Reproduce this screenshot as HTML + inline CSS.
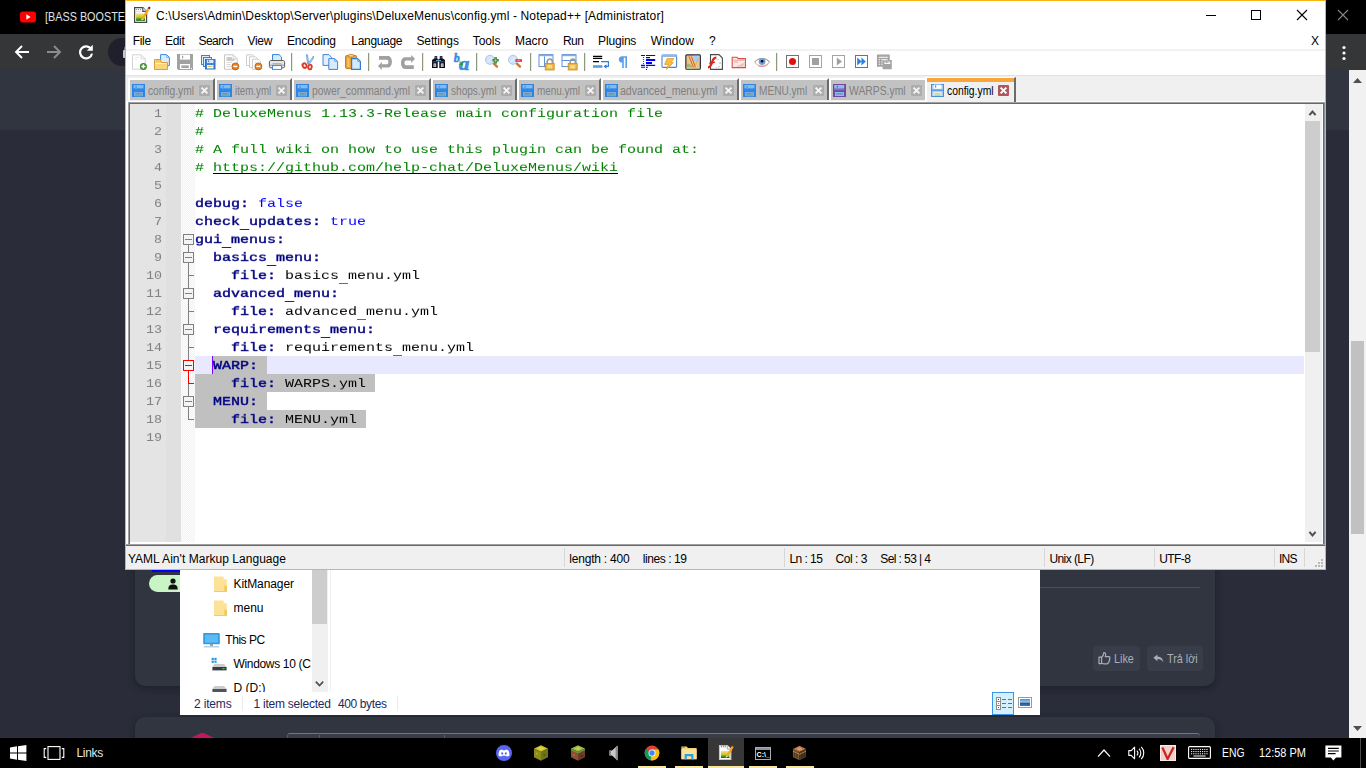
<!DOCTYPE html>
<html lang="en">
<head>
<meta charset="utf-8">
<title>config.yml - Notepad++</title>
<style>
*{box-sizing:border-box;margin:0;padding:0}
html,body{width:1366px;height:768px;overflow:hidden;background:#2a2d39;font-family:"Liberation Sans",sans-serif;}
.abs,#stage div,#stage span,#stage svg{position:absolute}
#stage{position:relative;width:1366px;height:768px;overflow:hidden;background:#2a2d39}
#stage span{white-space:pre}
.mn{top:34px;font-size:12px;line-height:14px;color:#000}
.tab{top:78px;height:22px;background:#c2c2c2;border-left:2px solid #fff;border-top:2px solid #fff;border-right:2px solid #6b6b6b}
.tt{top:84px;font-size:12px;line-height:14px;color:#808080;transform-origin:0 0}
.st{top:552px;font-size:12px;line-height:14px;color:#000}
.sd{top:548px;width:1px;height:19px;background:#d7d7d7}
#stage svg.ti{top:54px;width:16px;height:16px;overflow:visible}
.tsep{top:53px;width:2px;height:18px;background:#8b9a7c;border-right:1px solid #e6eadf}
.ln{left:130px;width:32px;text-align:right;font:13.33px/18px "Liberation Mono",monospace;color:#808080;transform:scaleY(0.9);transform-origin:0 12px;margin-top:1px;will-change:transform}
.cl{left:195px;font:15px/18px "Liberation Mono",monospace;color:#000;transform:scaleY(0.8);transform-origin:0 12px;margin-top:1px;will-change:transform}
.cl i{font-style:normal}
.cl .c,.cl .cu{color:#008000}
.cl .k{color:#000080;-webkit-text-stroke:0.5px #000080}
.cl .b{color:#0000ff}
.ex{font-size:12px;line-height:14px;color:#000}
.tk{font-size:12px;line-height:14px;color:#fff}
.ind{top:766px;height:2px;background:#f7e69c}
.cl .u{font-weight:inherit;position:relative;top:3.6px}
</style>
</head>
<body>
<div id="stage">
<svg width="0" height="0" style="left:0;top:0"><defs>
<g id="icb"><rect width="13" height="13" fill="#2b85e4"/><rect x="1.5" y="1" width="10" height="3.4" fill="#86b8f1"/><rect x="3.6" y="1.6" width="1" height="2.4" fill="#3d8de6"/><rect x="2" y="8" width="9" height="4.2" fill="#76abea"/><rect x="3" y="9" width="7" height="3.2" fill="#7aa3b6"/><rect x="4.4" y="9.2" width="1" height="1" fill="#2cab55"/><rect x="6.4" y="9.2" width="1" height="1" fill="#2cab55"/><rect x="2.8" y="5.6" width="3" height="0.8" fill="#4f8fd6"/><rect x="7.4" y="5.6" width="3" height="0.8" fill="#4f8fd6"/></g>
<g id="icp"><rect width="13" height="13" fill="#6c4aa0"/><rect x="1.2" y="1" width="10" height="3.6" fill="#8fbaf0"/><rect x="3.8" y="1.6" width="1" height="2.2" fill="#7a55b0"/><rect x="1.2" y="5.2" width="10" height="1" fill="#8f78c0"/><rect x="2" y="8" width="9" height="4" fill="#86bfee"/><rect x="3" y="9.4" width="7" height="1" fill="#8a66b8"/></g>
<g id="ics"><rect width="13" height="13" fill="#4a8fd9"/><rect x="1" y="1" width="11" height="11" fill="#a9cff4"/><rect x="2.6" y="0.6" width="7.8" height="4.2" fill="#fff"/><rect x="4" y="1.2" width="1.2" height="2.4" fill="#5b9ae0"/><rect x="1" y="5.4" width="11" height="1.6" fill="#5f9fe4"/><rect x="2.6" y="8.2" width="7.8" height="3.8" fill="#fff"/><rect x="3.2" y="8.8" width="6.6" height="1" fill="#e8c25a"/><rect x="3.2" y="10.4" width="6.6" height="1.4" fill="#9ed28e"/></g>
<g id="clx"><rect width="11" height="11" rx="1" fill="#adadad"/><path d="M2.6 2.6 L8.4 8.4 M8.4 2.6 L2.6 8.4" stroke="#f4f4f4" stroke-width="2" fill="none"/></g>
<g id="clr"><rect width="11" height="11" rx="1" fill="#b2555c"/><path d="M2.6 2.6 L8.4 8.4 M8.4 2.6 L2.6 8.4" stroke="#fff" stroke-width="2" fill="none"/></g>
</defs></svg>
<!--BG: chrome browser + forum page behind-->
<div id="ctab" style="left:0;top:0;width:1366px;height:34px;background:#000"></div>
<svg style="left:20px;top:11px" width="16" height="12" viewBox="0 0 16 12"><rect x="0" y="0.5" width="16" height="11" rx="3" fill="#f00"/><path d="M6.3 3.3 L10.6 6 L6.3 8.7 Z" fill="#fff"/></svg>
<span style="left:44.8px;top:10px;font-size:12px;line-height:14px;color:#dfe1e5;transform:scaleX(0.902);transform-origin:0 0">[BASS BOOSTED</span>
<svg style="left:1336px;top:8px" width="14" height="14" viewBox="0 0 14 14"><path d="M2 2 L12 12 M12 2 L2 12" stroke="#858585" stroke-width="1.1" fill="none"/></svg>
<div id="ctool" style="left:0;top:34px;width:1366px;height:36px;background:#353638"></div>
<svg style="left:14px;top:44px" width="16" height="16" viewBox="0 0 16 16"><path d="M15 8 H2.5 M8 2 L2 8 L8 14" stroke="#fff" stroke-width="1.9" fill="none"/></svg>
<svg style="left:46px;top:44px" width="16" height="16" viewBox="0 0 16 16"><path d="M1 8 H13.5 M8 2 L14 8 L8 14" stroke="#8b8c8e" stroke-width="1.9" fill="none"/></svg>
<svg style="left:78px;top:44px" width="16" height="16" viewBox="0 0 16 16"><path d="M13.2 5.2 A6 6 0 1 0 14 9.6" stroke="#fff" stroke-width="2.2" fill="none"/><path d="M14.8 0.8 V6.8 H8.8 Z" fill="#fff"/></svg>
<div style="left:108px;top:38px;width:600px;height:28px;border-radius:14px;background:#1f202b"></div>
<svg style="left:122.5px;top:45px" width="10" height="13" viewBox="0 0 10 13"><rect x="0" y="5" width="10" height="8" rx="1" fill="#c4c7cb"/><path d="M2.2 5 V3.5 A2.8 2.8 0 0 1 7.8 3.5 V5" stroke="#c4c7cb" stroke-width="1.5" fill="none"/></svg>
<svg style="left:1341px;top:45px" width="6" height="16" viewBox="0 0 6 16"><circle cx="3" cy="2.5" r="1.6" fill="#fff"/><circle cx="3" cy="8" r="1.6" fill="#fff"/><circle cx="3" cy="13.5" r="1.6" fill="#fff"/></svg>
<div id="phead" style="left:0;top:70px;width:1349px;height:60px;background:#313540"></div>
<div id="pbody" style="left:0;top:130px;width:1349px;height:608px;background:#2a2d39"></div>
<div id="card1" style="left:135px;top:200px;width:1080px;height:486px;background:#313540;border-radius:0 0 10px 10px;box-shadow:0 2px 6px 1px rgba(16,18,26,0.4)"></div>
<div style="left:152px;top:570px;width:60px;height:2px;background:#0000f5"></div>
<div style="left:149px;top:575px;width:80px;height:17px;border-radius:8.5px;background:#c8f4c6"></div>
<svg style="left:168px;top:578px" width="10" height="12" viewBox="0 0 10 12"><circle cx="5" cy="3" r="2.6" fill="#111"/><path d="M0.3 11.5 C0.3 7.2 2.2 6.4 5 6.4 C7.8 6.4 9.7 7.2 9.7 11.5 Z" fill="#111"/></svg>
<div style="left:1040px;top:587px;width:160px;height:1px;background:#4b4f5b"></div>
<div style="left:1093px;top:646px;width:47px;height:25px;border-radius:4px;background:#393d49"></div>
<svg style="left:1098px;top:651px" width="13" height="14" viewBox="0 0 13 14"><path d="M1 6.2 H3.6 V12.6 H1 Z M3.6 6.6 C5.4 5.4 5.6 3.6 5.8 1.6 C7.6 1.2 8.2 3.4 7.2 5.6 H11 C12.4 5.8 12 7.4 11.4 7.8 C12 8.6 11.6 9.6 11 9.9 C11.4 10.8 10.8 11.6 10.2 11.8 C10.2 12.6 9.6 12.8 9 12.8 H5.4 L3.6 12.2" stroke="#a9adb8" stroke-width="1.2" fill="none" stroke-linejoin="round"/></svg>
<span style="left:1114.2px;top:651px;font-size:13px;line-height:15px;color:#a9adb8;transform:scaleX(0.83);transform-origin:0 0">Like</span>
<div style="left:1147px;top:646px;width:56px;height:25px;border-radius:4px;background:#393d49"></div>
<svg style="left:1153px;top:654px" width="11" height="9" viewBox="0 0 11 9"><path d="M4.4 0.4 L0.4 3.8 L4.4 7.2 V5 C7 5 9 5.8 10.4 8.4 C10 4.8 8 2.8 4.4 2.6 Z" fill="#a9adb8"/></svg>
<span style="left:1167px;top:651px;font-size:13px;line-height:15px;color:#a9adb8;transform:scaleX(0.83);transform-origin:0 0">Trả lời</span>
<div id="card2" style="left:135px;top:717px;width:1080px;height:41px;background:#313540;border-radius:10px 10px 0 0;box-shadow:0 2px 6px 1px rgba(16,18,26,0.4)"></div>
<svg style="left:190px;top:732px" width="25" height="6" viewBox="0 0 25 6"><path d="M0.6 6 L10.6 1.3 Q12.4 0.5 14.2 1.3 L24.4 6 Z" fill="#c4185c"/></svg>
<div style="left:287px;top:733px;width:913px;height:10px;border-radius:3px 3px 0 0;background:#393d49;border-top:1.5px solid #3b7de0;border-left:1px solid #555967"></div>
<div style="left:319px;top:735px;width:1px;height:4px;background:#5a5e6b"></div>
<div style="left:444px;top:735px;width:1px;height:4px;background:#5a5e6b"></div>
<div id="vsb" style="left:1349px;top:70px;width:17px;height:668px;background:#f1f1f1"></div>
<div id="vsbt" style="left:1351px;top:341px;width:13px;height:193px;background:#c1c1c1"></div>
<svg style="left:1353px;top:78px" width="9" height="5" viewBox="0 0 9 5"><path d="M0 5 L4.5 0 L9 5 Z" fill="#505050"/></svg>
<svg style="left:1353px;top:726px" width="9" height="5" viewBox="0 0 9 5"><path d="M0 0 L4.5 5 L9 0 Z" fill="#505050"/></svg>
<!--/BG-->
<!--EXPLORER-->
<div id="exp" style="left:180px;top:560px;width:860px;height:155px;background:#fff"></div>
<div style="left:312px;top:560px;width:16px;height:132px;background:#f0f0f0"></div>
<div style="left:312px;top:560px;width:15px;height:64px;background:#cdcdcd"></div>
<svg style="left:315px;top:680px" width="9" height="8" viewBox="0 0 9 8"><path d="M0.8 1.6 L4.5 5.6 L8.2 1.6" fill="none" stroke="#505050" stroke-width="1.7"/></svg>
<div style="left:330px;top:560px;width:1px;height:132px;background:#f0f0f0"></div>
<svg style="left:214px;top:576px" width="13" height="16" viewBox="0 0 13 16"><path d="M0 0.6 H9.6 V3.2 L12.8 3.2 V16 H0 Z" fill="#fbe297"/><path d="M9.6 0.6 V11 H12.8 V16 H11 V11" fill="none"/><rect x="10.4" y="9.6" width="2.4" height="6.4" fill="#f1c851"/><rect x="0" y="15" width="12.8" height="1" fill="#f3cf62"/></svg>
<span class="ex" style="left:233.5px;top:577px;letter-spacing:-0.1px">KitManager</span>
<svg style="left:214px;top:600px" width="13" height="16" viewBox="0 0 13 16"><path d="M0 0.6 H9.6 V3.2 L12.8 3.2 V16 H0 Z" fill="#fbe297"/><rect x="10.4" y="9.6" width="2.4" height="6.4" fill="#f1c851"/><rect x="0" y="15" width="12.8" height="1" fill="#f3cf62"/></svg>
<span class="ex" style="left:233.5px;top:601px">menu</span>
<svg style="left:203px;top:633px" width="17" height="15" viewBox="0 0 17 15"><rect x="0.8" y="0.6" width="15.4" height="10.2" fill="#35a2ee" stroke="#1f86d8" stroke-width="0.8"/><rect x="2" y="1.8" width="13" height="7.8" fill="#5fbaf4"/><rect x="7" y="11" width="3" height="2" fill="#9aa4ae"/><rect x="0.8" y="13.2" width="15.4" height="1.2" fill="#a9c3d8"/></svg>
<span class="ex" style="left:225.3px;top:633px;letter-spacing:-0.45px">This PC</span>
<svg style="left:211px;top:657px" width="16" height="14" viewBox="0 0 16 14"><rect x="0.6" y="0.8" width="2.2" height="2.2" fill="#1e9be8"/><rect x="3.4" y="0.8" width="2.2" height="2.2" fill="#1e9be8"/><rect x="0.6" y="3.6" width="2.2" height="2.2" fill="#1e9be8"/><rect x="3.4" y="3.6" width="2.2" height="2.2" fill="#1e9be8"/><path d="M3.4 7 H13 L15.6 10 H1.4 Z" fill="#c9ccd0"/><rect x="1.4" y="10" width="14.2" height="3.4" fill="#3a3e44"/><rect x="11.6" y="11.2" width="2" height="1" fill="#42d86a"/></svg>
<span class="ex" style="left:233.5px;top:657px;letter-spacing:-0.33px">Windows 10 (C</span>
<div style="left:180px;top:680px;width:132px;height:12px;overflow:hidden"><svg style="left:31px;top:5px" width="16" height="8" viewBox="0 0 16 8"><path d="M3.4 1 H13 L15.6 4 H1.4 Z" fill="#c9ccd0"/><rect x="1.4" y="4" width="14.2" height="3.4" fill="#50545a"/></svg><span class="ex" style="left:53.5px;top:1px">D (D:)</span></div>
<div style="left:242px;top:696px;width:1px;height:15px;background:#ececec"></div>
<div style="left:397px;top:696px;width:1px;height:15px;background:#ececec"></div>
<span class="ex" style="left:194px;top:697px;color:#1b2a63;letter-spacing:-0.17px">2 items</span>
<span class="ex" style="left:253.5px;top:697px;color:#1b2a63;letter-spacing:-0.24px">1 item selected</span>
<span class="ex" style="left:338px;top:697px;color:#1b2a63;letter-spacing:-0.39px">400 bytes</span>
<div style="left:992px;top:692px;width:22px;height:23px;background:#d5effc;border:1px solid #3996e6"></div>
<div style="left:996px;top:697px;width:5px;height:13px;background:#fff;border:1px solid #8c8c8c"></div>
<div style="left:996px;top:701px;width:5px;height:1px;background:#8c8c8c"></div><div style="left:996px;top:705px;width:5px;height:1px;background:#8c8c8c"></div>
<div style="left:998px;top:703px;width:1px;height:1px;background:#3a86e8"></div><div style="left:998px;top:707px;width:1px;height:1px;background:#e03020"></div><div style="left:998px;top:699px;width:1px;height:1px;background:#303030"></div>
<div style="left:1002px;top:699px;width:4px;height:1px;background:#6e6e6e"></div><div style="left:1008px;top:699px;width:4px;height:1px;background:#6e6e6e"></div>
<div style="left:1002px;top:703px;width:4px;height:1px;background:#6e6e6e"></div><div style="left:1008px;top:703px;width:4px;height:1px;background:#6e6e6e"></div>
<div style="left:1002px;top:707px;width:4px;height:1px;background:#6e6e6e"></div><div style="left:1008px;top:707px;width:4px;height:1px;background:#6e6e6e"></div>
<div style="left:1018px;top:697px;width:14px;height:11px;background:#fff;border:1px solid #9a9a9a"></div>
<div style="left:1020px;top:699px;width:10px;height:7px;background:linear-gradient(#3b94e6,#9cc6ee 45%,#35507a 60%,#2f7fd0)"></div>
<!--/EXPLORER-->
<!--TASKBAR-->
<div id="task" style="left:0;top:738px;width:1366px;height:30px;background:#000"></div>
<svg style="left:10px;top:745px" width="17" height="16" viewBox="0 0 17 16"><path d="M0 2.4 L7 1.3 V7.5 H0 Z M8 1.15 L16.4 0 V7.5 H8 Z M0 8.5 H7 V14.7 L0 13.6 Z M8 8.5 H16.4 V16 L8 14.85 Z" fill="#fff"/></svg>
<svg style="left:43px;top:746px" width="22" height="14" viewBox="0 0 22 14"><rect x="5" y="0.6" width="12" height="12.8" fill="none" stroke="#fff" stroke-width="1.1"/><path d="M3.2 2.6 H1.2 V11.4 H3.2 M18.8 2.6 H20.8 V11.4 H18.8" fill="none" stroke="#fff" stroke-width="1.1"/></svg>
<span class="tk" style="left:76.4px;top:746px;color:#e6e6e6;letter-spacing:-0.28px">Links</span>

<svg style="left:496px;top:745px" width="16" height="16" viewBox="0 0 16 16"><circle cx="8" cy="8" r="8" fill="#5865f2"/><path d="M3.6 5.6 C5 4.6 6.2 4.6 6.2 4.6 L6.6 5.2 H9.4 L9.8 4.6 C9.8 4.6 11 4.6 12.4 5.6 C13.2 7 13.6 8.8 13.4 10.6 C12.4 11.4 11.4 11.6 10.8 11.6 L10.2 10.8 H5.8 L5.2 11.6 C4.6 11.6 3.6 11.4 2.6 10.6 C2.4 8.8 2.8 7 3.6 5.6 Z" fill="#fff"/><ellipse cx="6.2" cy="8.4" rx="1" ry="1.2" fill="#5865f2"/><ellipse cx="9.8" cy="8.4" rx="1" ry="1.2" fill="#5865f2"/></svg>
<svg style="left:533px;top:745px" width="16" height="16" viewBox="0 0 16 16"><path d="M8 0.2 L15 3.6 L8 7 L1 3.6 Z" fill="#c4bd2a"/><path d="M1 3.6 L8 7 V15.8 L1 12.2 Z" fill="#8b8a1c"/><path d="M15 3.6 L8 7 V15.8 L15 12.2 Z" fill="#6f7416"/><path d="M4 3.4 L8 1.6 L12 3.6 L8 5.4 Z" fill="#ddd04a"/><rect x="3" y="7.6" width="2" height="2" fill="#a9a62c"/><rect x="10.4" y="9" width="2" height="2" fill="#55601a"/></svg>
<svg style="left:570px;top:745px" width="16" height="16" viewBox="0 0 16 16"><path d="M8 0.2 L15 3.6 L8 7 L1 3.6 Z" fill="#9db83e"/><path d="M1 3.6 L8 7 V15.8 L1 12.2 Z" fill="#8e4f31"/><path d="M15 3.6 L8 7 V15.8 L15 12.2 Z" fill="#6d3b25"/><path d="M1 3.6 L8 7 L15 3.6 V5.2 L8 8.6 L1 5.2 Z" fill="#5f9a3a"/><path d="M4.4 3.4 L8 1.8 L11.6 3.6 L8 5.2 Z" fill="#c7c95c"/><rect x="3" y="9" width="2" height="2" fill="#a9653f"/><rect x="10.6" y="10" width="2" height="2" fill="#4f2a1a"/></svg>
<svg style="left:608px;top:745px" width="12" height="16" viewBox="0 0 12 16"><path d="M1.4 5.4 H4 L9.6 0.4 V15.6 L4 10.6 H1.4 Z" fill="#c9c9c9"/><path d="M7.6 2.2 L9.6 0.4 V15.6 L7.6 13.8 Z" fill="#8a8a8a"/><rect x="1.4" y="5.4" width="1.4" height="5.2" fill="#7d7d7d"/></svg>
<svg style="left:644px;top:745px" width="16" height="16" viewBox="0 0 16 16"><circle cx="8" cy="8" r="7.4" fill="#db4437"/><path d="M8 8 L1.6 4.3 A7.4 7.4 0 0 0 6.6 15.27 Z" fill="#0f9d58"/><path d="M8 8 L6.6 15.27 A7.4 7.4 0 0 0 15.4 8 A7.4 7.4 0 0 0 14.6 4.6 H8 Z" fill="#f4c20d"/><circle cx="8" cy="8" r="3.5" fill="#fff"/><circle cx="8" cy="8" r="2.7" fill="#4285f4"/></svg>
<svg style="left:681px;top:745px" width="16" height="15" viewBox="0 0 16 15"><path d="M0.4 1.4 H5.6 L7 3 H15.6 V14.2 H0.4 Z" fill="#f6d473"/><path d="M0.4 4.4 H15.6 V14.2 H0.4 Z" fill="#fbe29a"/><rect x="1.2" y="2" width="2.6" height="0.9" fill="#3aa4ea"/><path d="M3.6 14.4 V9 H12.4 V14.4 H10.2 V11.2 H5.8 V14.4 Z" fill="#2aa1e8"/></svg>
<div style="left:708px;top:738px;width:36px;height:30px;background:#373737"></div>
<svg style="left:718px;top:744px" width="17" height="17" viewBox="0 0 18 18"><path d="M1.6 1.6 H9.8 L13.6 5.4 V16.4 H1.6 Z" fill="#fff" stroke="#c8c8c8" stroke-width="1.2"/><path d="M9.8 1.6 V5.4 H13.6" fill="#fff" stroke="#9a9a9a" stroke-width="1"/><path d="M3.6 1.6 V3.6 M5.6 1.6 V3.6 M7.6 1.6 V3.6" stroke="#555" stroke-width="0.8"/><rect x="3.1" y="7.4" width="9" height="7.4" fill="url(#ngr)"/><path d="M15.8 2.4 L9.4 13.4" stroke="#f6a81c" stroke-width="2.3"/><circle cx="16.3" cy="1.9" r="1.1" fill="#a01a10"/><path d="M8.2 14.6 L8.6 12.4 L10.4 13.6 Z" fill="#f3e4b0"/></svg>
<svg style="left:755px;top:747px" width="16" height="13" viewBox="0 0 16 13"><rect x="0.5" y="0.5" width="15" height="12" fill="#000" stroke="#a9a9b8"/><rect x="1" y="1" width="14" height="2" fill="#8e90a4"/><text x="1.6" y="10.4" font-family="Liberation Sans,sans-serif" font-weight="bold" font-size="7" fill="#fff">C:\_</text></svg>
<svg style="left:792px;top:745px" width="15" height="16" viewBox="0 0 16 16"><path d="M8 0.2 L15 3.6 L8 7 L1 3.6 Z" fill="#b9764a"/><path d="M4.4 3.4 L8 1.8 L11.6 3.6 L8 5.2 Z" fill="#d79a74"/><path d="M1 3.6 L8 7 V15.8 L1 12.2 Z" fill="#7b5a36"/><path d="M15 3.6 L8 7 V15.8 L15 12.2 Z" fill="#4d3822"/><path d="M3 6 V12 M5.4 7.2 V13.4 M10.6 7.2 V13.4 M13 6 V12" stroke="#2a2018" stroke-width="0.9"/><path d="M1 6 L8 9.4 L15 6" fill="none" stroke="#c09a5a" stroke-width="0.8"/></svg>
<div class="ind" style="left:638px;width:28px"></div><div class="ind" style="left:675px;width:28px"></div><div class="ind" style="left:708px;width:36px"></div><div class="ind" style="left:749px;width:28px"></div><div class="ind" style="left:786px;width:28px"></div>
<svg style="left:1097px;top:748px" width="14" height="10" viewBox="0 0 14 10"><path d="M1 8.6 L7 2 L13 8.6" fill="none" stroke="#fff" stroke-width="1.2"/></svg>
<svg style="left:1128px;top:746px" width="17" height="14" viewBox="0 0 17 14"><path d="M0.8 4.6 H3.2 L6.6 1.2 V12.8 L3.2 9.4 H0.8 Z" fill="none" stroke="#fff" stroke-width="1.1" stroke-linejoin="round"/><path d="M8.8 4.6 A3.4 3.4 0 0 1 8.8 9.4 M11 2.6 A6.2 6.2 0 0 1 11 11.4 M13.2 0.8 A8.8 8.8 0 0 1 13.2 13.2" fill="none" stroke="#fff" stroke-width="1.1"/></svg>
<div style="left:1160px;top:745px;width:16px;height:16px;background:#f4d0cc;border:1px solid #f9ece8"></div>
<svg style="left:1161px;top:746px" width="14" height="14" viewBox="0 0 14 14"><path d="M1.4 1.6 L6.6 13 L12.6 1.2" fill="none" stroke="#c8281c" stroke-width="2.3"/></svg>
<svg style="left:1188px;top:746px" width="23" height="13" viewBox="0 0 23 13"><rect x="0.6" y="0.6" width="21.8" height="11.8" rx="1" fill="none" stroke="#fff" stroke-width="1.1"/><path d="M3 3.4 H20 M3 5.6 H20 M3 7.8 H20" stroke="#fff" stroke-width="1" stroke-dasharray="1.2 1"/><path d="M5.4 10 H17.6" stroke="#fff" stroke-width="1"/></svg>
<span class="tk" style="left:1222.3px;top:746px;transform:scaleX(0.865);transform-origin:0 0">ENG</span>
<span class="tk" style="left:1258.8px;top:746px;transform:scaleX(0.913);transform-origin:0 0">12:58 PM</span>
<svg style="left:1325px;top:745px" width="17" height="16" viewBox="0 0 17 16"><path d="M0.4 0.4 H16.4 V12.4 H11 L8.4 15.4 L5.8 12.4 H0.4 Z" fill="#fff"/><path d="M3 3.4 H13.8 M3 6 H13.8 M3 8.6 H10.6" stroke="#000" stroke-width="1.1"/></svg>
<div style="left:1360px;top:738px;width:1px;height:30px;background:#4a4a4a"></div>
<!--/TASKBAR-->
<!--NPP-->
<div id="npp" style="left:125px;top:0;width:1201px;height:570px;background:#fff;border:1px solid #f6b511"></div>
<svg style="left:133px;top:6px" width="18" height="18" viewBox="0 0 18 18"><defs><linearGradient id="ngr" x1="0" y1="0" x2="0" y2="1"><stop offset="0" stop-color="#f8dc90"/><stop offset="0.5" stop-color="#c9c922"/><stop offset="0.78" stop-color="#3c9a1a"/><stop offset="1" stop-color="#056005"/></linearGradient></defs><path d="M1.6 1.6 H9.8 L13.6 5.4 V16.4 H1.6 Z" fill="#fff" stroke="#454545" stroke-width="1.2"/><path d="M9.8 1.6 V5.4 H13.6" fill="#fff" stroke="#454545" stroke-width="1.1"/><circle cx="3.6" cy="3.6" r="0.55" fill="#6a6a9a"/><circle cx="5.6" cy="3.6" r="0.55" fill="#6a6a9a"/><circle cx="7.6" cy="3.6" r="0.55" fill="#6a6a9a"/><path d="M3.2 5.6 H8.6" stroke="#d0d0d0" stroke-width="0.7"/><rect x="3.1" y="7.4" width="9" height="7.4" fill="url(#ngr)"/><path d="M15.8 2.4 L9.4 13.4" stroke="#f6a81c" stroke-width="2.3"/><path d="M16.4 1.4 L15 3.8" stroke="#9cc0d8" stroke-width="2"/><circle cx="16.3" cy="1.9" r="1.1" fill="#8a0a00"/><path d="M8.2 14.6 L8.6 12.4 L10.4 13.6 Z" fill="#f3e4b0"/></svg>

<span id="ttl" style="left:156px;top:9px;font-size:12px;line-height:14px;color:#000;letter-spacing:0.134px">C:\Users\Admin\Desktop\Server\plugins\DeluxeMenus\config.yml - Notepad++ [Administrator]</span>
<svg style="left:1205px;top:8px" width="12" height="14" viewBox="0 0 12 14"><path d="M1 7.5 H11" stroke="#000" stroke-width="1"/></svg>
<svg style="left:1250px;top:9px" width="12" height="12" viewBox="0 0 12 12"><rect x="1.5" y="1.5" width="9" height="9" fill="none" stroke="#000" stroke-width="1"/></svg>
<svg style="left:1296px;top:9px" width="12" height="12" viewBox="0 0 12 12"><path d="M1 1 L11 11 M11 1 L1 11" stroke="#000" stroke-width="1.1" fill="none"/></svg>
<span class="mn" style="left:132.7px;letter-spacing:-0.31px">File</span>
<span class="mn" style="left:165.0px;letter-spacing:-0.32px">Edit</span>
<span class="mn" style="left:198.6px;letter-spacing:-0.59px">Search</span>
<span class="mn" style="left:247.4px;letter-spacing:-0.25px">View</span>
<span class="mn" style="left:286.9px;letter-spacing:-0.13px">Encoding</span>
<span class="mn" style="left:351.3px;letter-spacing:-0.31px">Language</span>
<span class="mn" style="left:416.5px;letter-spacing:-0.14px">Settings</span>
<span class="mn" style="left:472.7px;letter-spacing:-0.06px">Tools</span>
<span class="mn" style="left:514.9px;letter-spacing:-0.01px">Macro</span>
<span class="mn" style="left:562.9px;letter-spacing:-0.54px">Run</span>
<span class="mn" style="left:598.1px;letter-spacing:-0.18px">Plugins</span>
<span class="mn" style="left:650.8px;letter-spacing:0.10px">Window</span>
<span class="mn" style="left:708.9px;letter-spacing:0.00px">?</span>
<span class="mn" style="left:1311px">X</span>
<div style="left:126px;top:49px;width:1199px;height:2px;background:#f2f2f2"></div>
<!--TOOLBAR-->
<svg class="ti" style="left:131px" viewBox="0 0 16 16"><path d="M1.5 0.8 H10.2 L14.2 4.8 V15.2 H1.5 Z" fill="#fff" stroke="#d2d2d2"/><path d="M10.2 0.8 V4.8 H14.2" fill="none" stroke="#d8d8d8"/><path d="M3.5 3.5 H8 M3.5 5.5 H6" stroke="#ebebeb"/><circle cx="12.4" cy="12.4" r="3.5" fill="#3c8c2e"/><path d="M12.4 10.3 V14.5 M10.3 12.4 H14.5" stroke="#fff" stroke-width="1.5"/></svg>
<svg class="ti" style="left:154px" viewBox="0 0 16 16"><path d="M6.6 0.6 H12.6 L15.4 3.4 V11.6 H6.6 Z" fill="#d9eefb" stroke="#3b8ae2"/><path d="M12.6 0.6 V3.4 H15.4" fill="none" stroke="#7db4ee"/><path d="M0.5 5.5 H6 L7.5 8.5 H13.5 V15.5 H0.5 Z" fill="#fbd675" stroke="#e39a3c"/><path d="M1.5 9.5 H12.5" stroke="#fff2c4"/><path d="M2 7 H5.5" stroke="#f1b04c"/></svg>
<svg class="ti" style="left:177px" viewBox="0 0 16 16"><path d="M0 0 H16 V16 H1.4 L0 14.6 Z" fill="#a2a2a2"/><rect x="3" y="0.6" width="10" height="5" fill="#fff"/><rect x="5" y="1.8" width="1.2" height="2.6" fill="#a2a2a2"/><rect x="3" y="10" width="10" height="5" fill="#fff"/><rect x="4.4" y="11.4" width="7.4" height="2.6" fill="#a2a2a2"/><rect x="14" y="14" width="1" height="1" fill="#fff"/></svg>
<svg class="ti" style="left:200px" viewBox="0 0 16 16"><rect x="1.5" y="1.5" width="8" height="9" fill="#e4eefa" stroke="#3f7fd0"/><rect x="3.5" y="3.5" width="8" height="9" fill="#e4eefa" stroke="#3f7fd0"/><rect x="5.5" y="5.5" width="9.5" height="9.5" fill="#3e86dc" stroke="#2d6cc0"/><rect x="7" y="5.8" width="6.4" height="3.2" fill="#dbeafb"/><rect x="8.2" y="6.4" width="1" height="1.8" fill="#2d6cc0"/><rect x="7" y="11" width="6.4" height="3.4" fill="#fff"/><rect x="7.8" y="11.8" width="4.8" height="1.2" fill="#e8c25a"/></svg>
<svg class="ti" style="left:223px" viewBox="0 0 16 16"><path d="M1.5 0.8 H10.2 L14.2 4.8 V15.2 H1.5 Z" fill="#fff" stroke="#c6c6c6"/><path d="M10.2 0.8 V4.8 H14.2" fill="none" stroke="#d0d0d0"/><path d="M3.5 4 H9 M3.5 6 H11.5" stroke="#8a8a8a" stroke-width="0.9"/><path d="M3.5 8.5 H9 M3.5 10.5 H8 M3.5 12.5 H8" stroke="#cfcfcf" stroke-width="0.8"/><circle cx="12.4" cy="12.4" r="3.5" fill="#e8801e"/><circle cx="12.4" cy="12.4" r="3.5" fill="none" stroke="#b85a10" stroke-width="0.8"/><path d="M10.4 12.4 H14.4" stroke="#fff" stroke-width="1.5"/></svg>
<svg class="ti" style="left:246px" viewBox="0 0 16 16"><path d="M0.5 0.8 H6.5 L8.5 2.8 V11.5 H0.5 Z" fill="#fff" stroke="#cdcdcd"/><path d="M3.5 2.8 H9.5 L11.5 4.8 V13.5 H3.5 Z" fill="#fff" stroke="#cdcdcd"/><path d="M6.5 5.2 H12.2 L14.5 7.5 V15.3 H6.5 Z" fill="#fff" stroke="#cdcdcd"/><path d="M8 8 H11" stroke="#e2e2e2"/><circle cx="12.4" cy="12.4" r="3.5" fill="#e8801e"/><circle cx="12.4" cy="12.4" r="3.5" fill="none" stroke="#b85a10" stroke-width="0.8"/><path d="M10.4 12.4 H14.4" stroke="#fff" stroke-width="1.5"/></svg>
<svg class="ti" style="left:269px" viewBox="0 0 16 16"><path d="M3.5 7 V0.6 H10 L12.5 3 V7" fill="#d7ecfb" stroke="#3584e0"/><path d="M1.8 6.5 H14.2 C15.2 6.5 15.6 7.3 15.6 8 V12.6 C15.6 13.4 15 13.8 14.2 13.8 H1.8 C1 13.8 0.4 13.4 0.4 12.6 V8 C0.4 7.3 0.8 6.5 1.8 6.5 Z" fill="#e6e6e6" stroke="#5c5c5c"/><path d="M0.8 11.2 H15.2" stroke="#9a9a9a"/><rect x="3.5" y="9" width="9" height="1.6" fill="#b6b6b6"/><rect x="3.5" y="11.6" width="9" height="3.8" fill="#fff" stroke="#3b8ae2"/></svg>
<div class="tsep" style="left:291px"></div>
<svg class="ti" style="left:300px" viewBox="0 0 16 16"><path d="M6.4 0.6 L7.6 10 L8.8 9.4 L7.4 0.8 Z" fill="#c4e2f6" stroke="#5a9ad8" stroke-width="0.8"/><path d="M13.6 2 L8 9.6 L9 10.4 L13.2 4.6 Z" fill="#c4e2f6" stroke="#5a9ad8" stroke-width="0.8"/><ellipse cx="4.6" cy="11.6" rx="1.9" ry="2.3" fill="none" stroke="#dc3a2a" stroke-width="1.9" transform="rotate(-30 4.6 11.6)"/><ellipse cx="10" cy="13" rx="1.7" ry="2.4" fill="none" stroke="#dc3a2a" stroke-width="1.9" transform="rotate(10 10 13)"/></svg>
<svg class="ti" style="left:322px" viewBox="0 0 16 16"><path d="M1 0.6 H6.8 L9.6 3.4 V11.4 H1 Z" fill="#e2effb" stroke="#3f84da" stroke-width="1"/><path d="M6.8 4.6 H12.8 L15.6 7.4 V15.4 H6.8 Z" fill="#d8ebfa" stroke="#3f84da" stroke-width="1"/><path d="M12.6 4.6 V7.4 H15.4" fill="none" stroke="#6da8ea"/></svg>
<svg class="ti" style="left:345px" viewBox="0 0 16 16"><rect x="0.6" y="1.6" width="11" height="13" rx="1" fill="#e9a33e" stroke="#c67818"/><rect x="3.6" y="0.4" width="5" height="2.6" rx="0.8" fill="#f7d67a" stroke="#c67818" stroke-width="0.8"/><rect x="2.4" y="4" width="2" height="9" fill="#f6c965"/><path d="M6.6 4.6 H12.6 L15.4 7.4 V15.4 H6.6 Z" fill="#d4e9f9" stroke="#2f7bd8" stroke-width="1.2"/><path d="M12.6 4.6 V7.4 H15.4" fill="none" stroke="#6da8ea"/></svg>
<div class="tsep" style="left:368px"></div>
<svg class="ti" style="left:376px" viewBox="0 0 16 16"><path d="M3 2 H12 C14.5 2 15.9 4.5 15.9 7.8 C15.9 11 14.5 13.6 12 13.6 H5.8 V10.3 H11 C12 10.3 12.4 9 12.4 7.8 C12.4 6.6 12 5.7 11 5.7 H3 Z" fill="#a0a0a0"/><path d="M5.9 8 V15.9 L2 12 Z" fill="#a0a0a0"/></svg>
<svg class="ti" style="left:399px" viewBox="0 0 16 16"><path d="M12.2 3.3 H6 C3.5 3.3 2 5.8 2 9 C2 12.3 3.5 14.9 6 14.9 H14.8 V11.2 H7 C6 11.2 5.5 10.2 5.5 9 C5.5 7.8 6 6.6 7 6.6 H12.2 Z" fill="#a0a0a0"/><path d="M12.1 1 V8.9 L16 4.85 Z" fill="#a0a0a0"/></svg>
<div class="tsep" style="left:422px"></div>
<svg class="ti" style="left:430px" viewBox="0 0 16 16"><path d="M4.6 2 H7.2 V4.2 L8 5.4 H9 L9.8 4.2 V2 H12.4 V4.2 L15 6 V14 H9.3 V7.6 H7.7 V14 H2 V6 L4.6 4.2 Z" fill="#0c0c14"/><rect x="3.4" y="9.4" width="2.8" height="3.6" fill="#c9ccd2"/><rect x="10.8" y="9.4" width="2.8" height="3.6" fill="#c9ccd2"/><rect x="4.4" y="9.4" width="0.8" height="3.6" fill="#8a8e98"/><rect x="11.8" y="9.4" width="0.8" height="3.6" fill="#8a8e98"/><rect x="5.4" y="2.4" width="1" height="2" fill="#8a92d0"/><rect x="10.6" y="2.4" width="1" height="2" fill="#8a62c0"/><rect x="6" y="6" width="5" height="1" fill="#5aa0e0"/><rect x="2.4" y="7" width="5" height="1.4" fill="#3a3e48"/><rect x="9.6" y="7" width="5" height="1.4" fill="#3a3e48"/></svg>
<svg class="ti" style="left:453px" viewBox="0 0 16 16"><text x="0.8" y="7.8" font-family="Liberation Serif,serif" font-style="italic" font-weight="bold" font-size="12" fill="#338ae6" stroke="#338ae6" stroke-width="0.5">b</text><text x="6" y="15.6" font-family="Liberation Serif,serif" font-style="italic" font-weight="bold" font-size="19" fill="#3a8fe8" stroke="#3a8fe8" stroke-width="0.6" textLength="10.4" lengthAdjust="spacingAndGlyphs">a</text><path d="M5.6 6.6 L9 10" stroke="#a8b4a0" stroke-width="1.5"/><path d="M10 11.2 L5.6 10.6 L9.2 7.2 Z" fill="#2c9a2c"/></svg>
<div class="tsep" style="left:476px"></div>
<svg class="ti" style="left:484px" viewBox="0 0 16 16"><path d="M9.6 9.4 L13 12.6" stroke="#c87a32" stroke-width="2.4" stroke-linecap="round"/><circle cx="6" cy="5.8" r="4.5" fill="#d4e4f7" stroke="#a9c6ea"/><path d="M3.4 8 L8 3.4" stroke="#eef5fc" stroke-width="1"/><path d="M11.6 3.2 V9.4 M8.5 6.3 H14.7" stroke="#2f7f2e" stroke-width="2.6"/><path d="M11.6 4.4 V8.2 M9.7 6.3 H13.5" stroke="#b8d0a8" stroke-width="0.8"/></svg>
<svg class="ti" style="left:507px" viewBox="0 0 16 16"><path d="M9.6 9.4 L13 12.6" stroke="#c87a32" stroke-width="2.4" stroke-linecap="round"/><circle cx="6" cy="5.8" r="4.5" fill="#d4e4f7" stroke="#a9c6ea"/><path d="M3.4 8 L8 3.4" stroke="#eef5fc" stroke-width="1"/><rect x="8.4" y="5.2" width="6.6" height="2.6" rx="0.6" fill="#e8191c"/><rect x="9.6" y="5.9" width="4" height="0.8" fill="#f6a0a0"/></svg>
<div class="tsep" style="left:530px"></div>
<svg class="ti" style="left:538px" viewBox="0 0 16 16"><rect x="1" y="0.6" width="14" height="12" fill="#fff" stroke="#4f86d4" stroke-width="0.9"/><rect x="1" y="0.6" width="14" height="1.6" fill="#7eaee6"/><path d="M6.5 2.4 V12.6" stroke="#4f86d4" stroke-width="0.9"/><path d="M9.2 10 V7.8 A2.6 2.6 0 0 1 14.4 7.8 V10" fill="none" stroke="#9c9c9c" stroke-width="1.7"/><rect x="7.2" y="9.4" width="9" height="6.6" fill="#e9b544" stroke="#c98f22" stroke-width="0.8"/><rect x="9.2" y="11" width="5" height="3.4" fill="#f6d88a"/></svg>
<svg class="ti" style="left:561px" viewBox="0 0 16 16"><rect x="1" y="0.6" width="14" height="12" fill="#fff" stroke="#4f86d4" stroke-width="0.9"/><rect x="1" y="0.6" width="14" height="1.6" fill="#7eaee6"/><path d="M1 6.5 H15" stroke="#4f86d4" stroke-width="0.9"/><path d="M9.2 10 V7.8 A2.6 2.6 0 0 1 14.4 7.8 V10" fill="none" stroke="#9c9c9c" stroke-width="1.7"/><rect x="7.2" y="9.4" width="9" height="6.6" fill="#e9b544" stroke="#c98f22" stroke-width="0.8"/><rect x="9.2" y="11" width="5" height="3.4" fill="#f6d88a"/></svg>
<div class="tsep" style="left:584px"></div>
<svg class="ti" style="left:592px" viewBox="0 0 16 16"><path d="M1 2.4 H10.2 M1 4.4 H10.2 M1 7.6 H7" stroke="#000" stroke-width="1.1"/><path d="M9 7.6 H16.4 V12.4 H13.4" fill="none" stroke="#2e78d2" stroke-width="1.1"/><path d="M14.4 10.2 V14.8 L11.6 12.5 Z" fill="#2e78d2"/><rect x="1" y="11.2" width="9.4" height="2.6" fill="#5b9be2"/></svg>
<svg class="ti" style="left:615px" viewBox="0 0 16 16"><path d="M7 2.2 H12 V14 H10.4 V3.8 H8.8 V14 H7.2 V8.6 C5 8.6 3.8 7.2 3.8 5.4 C3.8 3.6 5 2.2 7 2.2 Z" fill="#5aa0e8"/></svg>
<svg class="ti" style="left:638px" viewBox="0 0 16 16"><path d="M3 1.5 H7 M8 1.5 H17.2 M8 3.6 H12 M3 11.4 H7 M8 11.4 H17.2 M3 13.3 H7 M8 13.3 H10" stroke="#0000ff" stroke-width="1.1"/><rect x="8" y="5" width="9.2" height="2" fill="#0000ff"/><rect x="8" y="8" width="6" height="2" fill="#0000ff"/><rect x="8" y="15" width="1" height="1" fill="#0000ff"/><path d="M5.5 3 V10.4" stroke="#ff0000" stroke-width="1.1" stroke-dasharray="1 1"/></svg>
<svg class="ti" style="left:661px" viewBox="0 0 16 16"><rect x="1" y="1" width="14.6" height="12.4" rx="0.8" fill="#fff" stroke="#4a86d2" stroke-width="1.1"/><rect x="1" y="1" width="14.6" height="2" fill="#8db8ea"/><path d="M6 4.6 H13 L9.8 8.6 H12.4 L5.4 15.4 L7.6 10.4 H3.6 Z" fill="#f6c040" stroke="#e79a28" stroke-width="0.8"/></svg>
<svg class="ti" style="left:685px" viewBox="0 0 17 16"><rect x="0.9" y="0.4" width="15.4" height="15.2" rx="1" fill="#ecc987" stroke="#2b2b3d" stroke-width="1.3"/><rect x="9" y="1.4" width="6.4" height="6.4" fill="#a9cdf2"/><path d="M2 10 C5 8.5 6 12 8.6 13 V14.8 H2 Z" fill="#a8b46c"/><path d="M4.2 2 L9.4 14.6 M6.8 2 L11.4 14.6" stroke="#e04030" stroke-width="0.9"/><path d="M9.4 14.6 L14.4 4" stroke="#f0a830" stroke-width="0.9"/><rect x="1.6" y="13.6" width="14" height="1.4" fill="#b8dca0"/></svg>
<svg class="ti" style="left:707px" viewBox="0 0 16 16"><path d="M3.5 0.6 H12 L15.4 4 V15.4 H3.5 Z" fill="#fff" stroke="#4a4a4a" stroke-width="1.1"/><path d="M11 5 V6 M13 8 V10 M12.4 12 L11.4 13.4 M9.6 13.4 H9" stroke="#8fa89a" stroke-width="0.9"/><path d="M1 13.4 C3.6 13.2 4.2 11.2 4.8 9 C5.6 6 6.6 3.4 9.4 3.6" fill="none" stroke="#e0241c" stroke-width="2.2"/><path d="M2.4 9.6 L7.8 8" stroke="#e0241c" stroke-width="1.8"/></svg>
<svg class="ti" style="left:730px" viewBox="0 0 16 16"><path d="M2.2 3.2 H7 L8.2 4.6 H15.4 V13.6 H2.2 Z" fill="#fbe9e7" stroke="#d2504c" stroke-width="1.1"/><path d="M3.4 6.2 H14 M4 8 H8" stroke="#ee9a94" stroke-width="0.9"/><path d="M6 12.6 C8 10 10 12 13.6 8.4 V12.6 Z" fill="#f2bdb6"/></svg>
<svg class="ti" style="left:754px" viewBox="0 0 17 16"><path d="M0.8 8.4 C3.6 3.4 12.6 2.6 16.4 8.2 C12.6 13.6 4.6 13.6 0.8 8.4 Z" fill="#fff" stroke="#d8b070" stroke-width="1"/><path d="M0.8 8.4 C3.6 3.4 12.6 2.6 16.4 8.2" fill="none" stroke="#a8a8a8" stroke-width="1.2"/><path d="M4.6 12 C8 13.6 12.8 13 15.4 9.6" fill="none" stroke="#e89a98" stroke-width="1.1"/><circle cx="8.6" cy="7.6" r="3.6" fill="#6a9fdc"/><circle cx="8.6" cy="7.2" r="1.4" fill="#0a0a14"/></svg>
<div class="tsep" style="left:776px"></div>
<svg class="ti" style="left:784px" viewBox="0 0 16 16"><rect x="2.5" y="1.5" width="12" height="12" fill="#fff" stroke="#727272"/><circle cx="8.5" cy="7.5" r="3.5" fill="#e01010"/></svg>
<svg class="ti" style="left:807px" viewBox="0 0 16 16"><rect x="2.5" y="1.5" width="12" height="12" fill="#fff" stroke="#a4a4a4"/><rect x="5" y="4" width="7" height="7" fill="#a0a0a0"/></svg>
<svg class="ti" style="left:830px" viewBox="0 0 16 16"><rect x="2.5" y="1.5" width="12" height="12" fill="#fff" stroke="#a4a4a4"/><path d="M6.8 3.4 L12 7.5 L6.8 11.6 Z" fill="#a0a0a0"/></svg>
<svg class="ti" style="left:853px" viewBox="0 0 16 16"><rect x="2.5" y="1.5" width="12" height="12" fill="#fff" stroke="#727272"/><path d="M4.2 3.4 L8.6 7.5 L4.2 11.6 Z M8.4 3.4 L12.8 7.5 L8.4 11.6 Z" fill="#2a80e2"/></svg>
<svg class="ti" style="left:876px" viewBox="0 0 17 16"><path d="M1 0 H14.6 V6 H16.8 V15.8 H7 V13 H1 Z" fill="#a4a4a4"/><path d="M3 3 H12.6" stroke="#fff" stroke-width="1"/><path d="M3 5.6 H4.2 M5.6 5.6 H12.4 M3 8 H4.2 M5.6 8 H7 M3 10.4 H4.2 M5.6 10.4 H7" stroke="#fff" stroke-width="1.1"/><path d="M9 9.6 H15 M9.6 7.4 V9.6 M12 8 H14.6 V9.6" stroke="#fff" stroke-width="1" fill="none"/></svg>
<!--/TOOLBAR-->

<div style="left:126px;top:76px;width:1199px;height:26px;background:#f0f0f0"></div>
<div style="left:126px;top:75px;width:1199px;height:1px;background:#e2e2e2"></div>
<div style="left:126px;top:101px;width:1199px;height:1px;background:#fff"></div>
<div class="tab" style="left:128px;width:87px"></div>
<svg class="tic" style="left:132px;top:84px" width="13" height="13" viewBox="0 0 13 13"><use href="#icb"/></svg>
<span class="tt" style="left:148.0px;transform:scaleX(0.851)">config.yml</span>
<svg style="left:199px;top:85px" width="11" height="11" viewBox="0 0 11 11"><use href="#clx"/></svg>
<div class="tab" style="left:215px;width:77px"></div>
<svg class="tic" style="left:219px;top:84px" width="13" height="13" viewBox="0 0 13 13"><use href="#icb"/></svg>
<span class="tt" style="left:234.8px;transform:scaleX(0.810)">item.yml</span>
<svg style="left:276px;top:85px" width="11" height="11" viewBox="0 0 11 11"><use href="#clx"/></svg>
<div class="tab" style="left:292px;width:139px"></div>
<svg class="tic" style="left:296px;top:84px" width="13" height="13" viewBox="0 0 13 13"><use href="#icb"/></svg>
<span class="tt" style="left:312.0px;transform:scaleX(0.859)">power_command.yml</span>
<svg style="left:415px;top:85px" width="11" height="11" viewBox="0 0 11 11"><use href="#clx"/></svg>
<div class="tab" style="left:431px;width:86px"></div>
<svg class="tic" style="left:435px;top:84px" width="13" height="13" viewBox="0 0 13 13"><use href="#icb"/></svg>
<span class="tt" style="left:451.0px;transform:scaleX(0.840)">shops.yml</span>
<svg style="left:501px;top:85px" width="11" height="11" viewBox="0 0 11 11"><use href="#clx"/></svg>
<div class="tab" style="left:517px;width:84px"></div>
<svg class="tic" style="left:521px;top:84px" width="13" height="13" viewBox="0 0 13 13"><use href="#icb"/></svg>
<span class="tt" style="left:537.0px;transform:scaleX(0.827)">menu.yml</span>
<svg style="left:585px;top:85px" width="11" height="11" viewBox="0 0 11 11"><use href="#clx"/></svg>
<div class="tab" style="left:601px;width:138px"></div>
<svg class="tic" style="left:605px;top:84px" width="13" height="13" viewBox="0 0 13 13"><use href="#icb"/></svg>
<span class="tt" style="left:620.4px;transform:scaleX(0.880)">advanced_menu.yml</span>
<svg style="left:723px;top:85px" width="11" height="11" viewBox="0 0 11 11"><use href="#clx"/></svg>
<div class="tab" style="left:739px;width:90px"></div>
<svg class="tic" style="left:743px;top:84px" width="13" height="13" viewBox="0 0 13 13"><use href="#icb"/></svg>
<span class="tt" style="left:759.3px;transform:scaleX(0.841)">MENU.yml</span>
<svg style="left:813px;top:85px" width="11" height="11" viewBox="0 0 11 11"><use href="#clx"/></svg>
<div class="tab" style="left:829px;width:97px;border-right:none"></div>
<svg class="tic" style="left:833px;top:84px" width="13" height="13" viewBox="0 0 13 13"><use href="#icp"/></svg>
<span class="tt" style="left:849.2px;transform:scaleX(0.863)">WARPS.yml</span>
<svg style="left:911px;top:85px" width="11" height="11" viewBox="0 0 11 11"><use href="#clx"/></svg>
<div style="left:925px;top:77px;width:91px;height:25px;background:#f0f0f0;border-right:2px solid #6b6b6b;border-left:2px solid #fff;border-top:1px solid #fff"></div>
<div style="left:927px;top:78px;width:87px;height:4px;background:#f9a53a"></div>
<svg style="left:931px;top:84px" width="13" height="13" viewBox="0 0 13 13"><use href="#ics"/></svg>
<span class="tt" style="left:946.8px;color:#000;transform:scaleX(0.862)">config.yml</span>
<svg style="left:998px;top:85px" width="11" height="11" viewBox="0 0 11 11"><use href="#clr"/></svg>
<!--EDITOR-->
<div style="left:128px;top:102px;width:1197px;height:444px;background:#fff;border:1px solid #a0a0a0;border-right-color:#8d8f96;border-bottom-color:#a0a0a0"></div>
<div style="left:129px;top:103px;width:1195px;height:442px;background:#fff;border:1px solid #696969"></div>
<div style="left:130px;top:104px;width:1193px;height:440px;background:#fff"></div>
<div style="left:130px;top:104px;width:36px;height:438px;background:#e4e4e4"></div>
<div style="left:166px;top:104px;width:15px;height:438px;background:#e0e0e0"></div>
<div style="left:181px;top:104px;width:14px;height:438px;background:#f8f8f8;background-image:conic-gradient(#fff 25%,#f0f0f0 0 50%,#fff 0 75%,#f0f0f0 0);background-size:2px 2px"></div>
<div style="left:195px;top:356px;width:1109px;height:18px;background:#e8e8ff"></div>
<div style="left:213px;top:356px;width:54px;height:18px;background:#c0c0c0"></div>
<div style="left:195px;top:374px;width:180px;height:18px;background:#c0c0c0"></div>
<div style="left:195px;top:392px;width:72px;height:18px;background:#c0c0c0"></div>
<div style="left:195px;top:410px;width:171px;height:18px;background:#c0c0c0"></div>
<div style="left:212px;top:356px;width:1px;height:18px;background:#8000ff"></div>
<span class="ln" style="top:104px">1</span>
<span class="ln" style="top:122px">2</span>
<span class="ln" style="top:140px">3</span>
<span class="ln" style="top:158px">4</span>
<span class="ln" style="top:176px">5</span>
<span class="ln" style="top:194px">6</span>
<span class="ln" style="top:212px">7</span>
<span class="ln" style="top:230px">8</span>
<span class="ln" style="top:248px">9</span>
<span class="ln" style="top:266px">10</span>
<span class="ln" style="top:284px">11</span>
<span class="ln" style="top:302px">12</span>
<span class="ln" style="top:320px">13</span>
<span class="ln" style="top:338px">14</span>
<span class="ln" style="top:356px">15</span>
<span class="ln" style="top:374px">16</span>
<span class="ln" style="top:392px">17</span>
<span class="ln" style="top:410px">18</span>
<span class="ln" style="top:428px">19</span>
<span class="cl" style="top:104px"><i class="c"># DeluxeMenus 1.13.3-Release main configuration file</i></span>
<span class="cl" style="top:122px"><i class="c">#</i></span>
<span class="cl" style="top:140px"><i class="c"># A full wiki on how to use this plugin can be found at:</i></span>
<span class="cl" style="top:158px"><i class="c"># </i><i class="cu">https://github.com/help-chat/DeluxeMenus/wiki</i></span>
<span class="cl" style="top:194px"><i class="k">debug:</i><i class="t"> </i><i class="b">false</i></span>
<span class="cl" style="top:212px"><i class="k">check<b class="u">_</b>updates:</i><i class="t"> </i><i class="b">true</i></span>
<span class="cl" style="top:230px"><i class="k">gui<b class="u">_</b>menus:</i></span>
<span class="cl" style="top:248px"><i class="k">  basics<b class="u">_</b>menu:</i></span>
<span class="cl" style="top:266px"><i class="k">    file:</i><i class="t"> basics<b class="u">_</b>menu.yml</i></span>
<span class="cl" style="top:284px"><i class="k">  advanced<b class="u">_</b>menu:</i></span>
<span class="cl" style="top:302px"><i class="k">    file:</i><i class="t"> advanced<b class="u">_</b>menu.yml</i></span>
<span class="cl" style="top:320px"><i class="k">  requirements<b class="u">_</b>menu:</i></span>
<span class="cl" style="top:338px"><i class="k">    file:</i><i class="t"> requirements<b class="u">_</b>menu.yml</i></span>
<span class="cl" style="top:356px"><i class="k">  WARP:</i></span>
<span class="cl" style="top:374px"><i class="k">    file:</i><i class="t"> WARPS.yml</i></span>
<span class="cl" style="top:392px"><i class="k">  MENU:</i></span>
<span class="cl" style="top:410px"><i class="k">    file:</i><i class="t"> MENU.yml</i></span>
<div style="left:213px;top:173px;width:405px;height:1px;background:#000"></div>
<div style="left:188px;top:245px;width:1px;height:115px;background:#808080"></div>
<div style="left:183px;top:234px;width:11px;height:11px;background:#f4f4f4;border:1px solid #808080"></div>
<div style="left:185px;top:239px;width:7px;height:1px;background:#808080"></div>
<div style="left:183px;top:252px;width:11px;height:11px;background:#f4f4f4;border:1px solid #808080"></div>
<div style="left:185px;top:257px;width:7px;height:1px;background:#808080"></div>
<div style="left:183px;top:288px;width:11px;height:11px;background:#f4f4f4;border:1px solid #808080"></div>
<div style="left:185px;top:293px;width:7px;height:1px;background:#808080"></div>
<div style="left:183px;top:324px;width:11px;height:11px;background:#f4f4f4;border:1px solid #808080"></div>
<div style="left:185px;top:329px;width:7px;height:1px;background:#808080"></div>
<div style="left:183px;top:396px;width:11px;height:11px;background:#f4f4f4;border:1px solid #808080"></div>
<div style="left:185px;top:401px;width:7px;height:1px;background:#808080"></div>
<div style="left:188px;top:275px;width:6px;height:1px;background:#808080"></div>
<div style="left:188px;top:311px;width:6px;height:1px;background:#808080"></div>
<div style="left:188px;top:347px;width:6px;height:1px;background:#808080"></div>
<div style="left:183px;top:360px;width:11px;height:11px;background:#f4f4f4;border:1px solid #ff0000"></div>
<div style="left:185px;top:365px;width:7px;height:1px;background:#ff0000"></div>
<div style="left:188px;top:371px;width:1px;height:13px;background:#ff0000"></div>
<div style="left:188px;top:383px;width:6px;height:1px;background:#ff0000"></div>
<div style="left:188px;top:384px;width:1px;height:12px;background:#808080"></div>
<div style="left:188px;top:407px;width:1px;height:13px;background:#808080"></div>
<div style="left:188px;top:419px;width:6px;height:1px;background:#808080"></div>
<div style="left:1305px;top:104px;width:17px;height:438px;background:#f0f0f0"></div>
<div style="left:1305px;top:121px;width:15px;height:231px;background:#cdcdcd"></div>
<svg style="left:1308px;top:109px" width="9" height="8" viewBox="0 0 9 8"><path d="M1.4 6.2 L4.5 2.6 L7.6 6.2" fill="none" stroke="#505050" stroke-width="2"/></svg>
<svg style="left:1308px;top:530px" width="9" height="8" viewBox="0 0 9 8"><path d="M1.4 1.8 L4.5 5.4 L7.6 1.8" fill="none" stroke="#505050" stroke-width="2"/></svg>
<!--/EDITOR-->

<!--STATUS-->
<div style="left:126px;top:544px;width:1199px;height:1px;background:#a0a0a0"></div>
<div style="left:126px;top:545px;width:1199px;height:1px;background:#696969"></div>
<div style="left:126px;top:546px;width:1199px;height:23px;background:#f0f0f0"></div>
<span class="st" style="left:127.9px;letter-spacing:0.04px">YAML Ain't Markup Language</span>
<span class="st" style="left:569.3px;letter-spacing:-0.21px">length : 400</span>
<span class="st" style="left:642.7px;letter-spacing:-0.41px">lines : 19</span>
<span class="st" style="left:789.4px;letter-spacing:-0.54px">Ln : 15</span>
<span class="st" style="left:835.5px;letter-spacing:-0.44px">Col : 3</span>
<span class="st" style="left:880.3px;letter-spacing:-0.59px">Sel : 53 | 4</span>
<span class="st" style="left:1049.4px;letter-spacing:-0.56px">Unix (LF)</span>
<span class="st" style="left:1159.2px;letter-spacing:-0.56px">UTF-8</span>
<span class="st" style="left:1279.1px;letter-spacing:-0.81px">INS</span>
<div class="sd" style="left:564px"></div>
<div class="sd" style="left:784px"></div>
<div class="sd" style="left:1044px"></div>
<div class="sd" style="left:1154px"></div>
<div class="sd" style="left:1274px"></div>
<div class="sd" style="left:1304px"></div>
<div style="left:1321px;top:559px;width:2px;height:2px;background:#b8b8b8"></div>
<div style="left:1318px;top:562px;width:2px;height:2px;background:#b8b8b8"></div>
<div style="left:1321px;top:562px;width:2px;height:2px;background:#b8b8b8"></div>
<div style="left:1315px;top:565px;width:2px;height:2px;background:#b8b8b8"></div>
<div style="left:1318px;top:565px;width:2px;height:2px;background:#b8b8b8"></div>
<div style="left:1321px;top:565px;width:2px;height:2px;background:#b8b8b8"></div>
<!--/STATUS-->

<!--/NPP-->
</div>
</body>
</html>
